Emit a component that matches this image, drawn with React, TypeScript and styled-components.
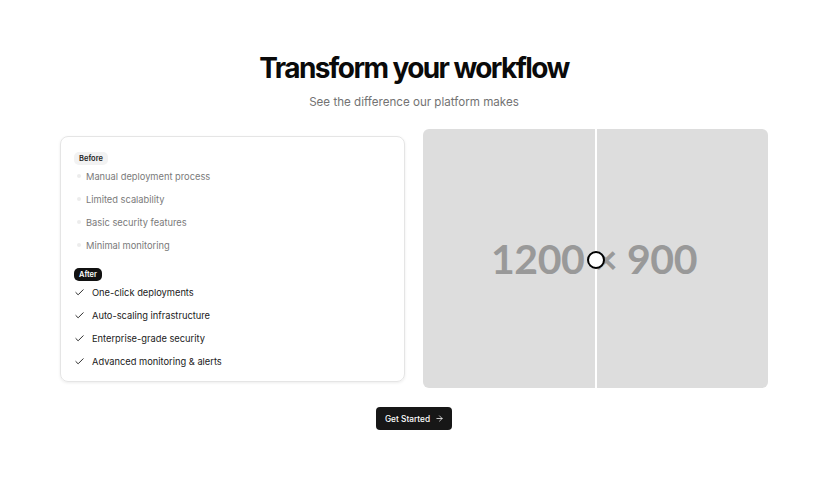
import React from 'react';
import styled, { createGlobalStyle } from 'styled-components';
import { Check, ArrowRight } from 'lucide-react';

const GlobalStyle = createGlobalStyle`
    body {
        margin: 0;
        background: #ffffff;
        font-family: Inter, "Noto Sans", sans-serif;
        color: #111111;
    }
`;

const Section = styled.section`
    display: flex;
    flex-direction: column;
    align-items: center;
    padding: 50px 60px 0;
`;

const Title = styled.h1`
    font-size: 28px;
    font-weight: 700;
    letter-spacing: -0.057em;
    line-height: 36px;
    margin: 0;
    color: #0a0a0a;
`;

const Subtitle = styled.p`
    font-size: 11.6px;
    color: #737373;
    margin: 7px 0 0;
    line-height: 18px;
`;

const Compare = styled.div`
    display: grid;
    grid-template-columns: 345px 345px;
    gap: 18px;
    align-items: center;
    margin-top: 18px;
`;

const Card = styled.div`
    border: 1px solid #e5e5e5;
    border-radius: 8px;
    box-shadow: 0 1px 3px rgba(0, 0, 0, 0.08);
    padding: 15px 13px 10px;
    height: 246px;
    box-sizing: border-box;
`;

const Badge = styled.span<{ $dark?: boolean }>`
    display: block;
    width: fit-content;
    font-size: 7.5px;
    font-weight: 600;
    line-height: 13px;
    padding: 0 5px;
    border-radius: 5px;
    background: ${(p) => (p.$dark ? '#111111' : '#f2f2f2')};
    color: ${(p) => (p.$dark ? '#ffffff' : '#222222')};
`;

const List = styled.ul`
    list-style: none;
    margin: 0;
    padding: 0;
`;

const Item = styled.li<{ $muted?: boolean }>`
    display: flex;
    align-items: center;
    gap: ${(p) => (p.$muted ? '5px' : '7px')};
    height: 23px;
    font-size: 9.3px;
    color: ${(p) => (p.$muted ? '#7a7a7a' : '#1a1a1a')};
`;

const Dot = styled.span`
    width: 4px;
    height: 4px;
    margin-left: 3px;
    border-radius: 50%;
    background: #ececec;
`;

const Group = styled.div`
    & + & {
        margin-top: 11px;
    }
`;

const Preview = styled.div`
    position: relative;
    height: 259px;
    border-radius: 6px;
    background: #dddddd;
    display: flex;
    align-items: center;
    justify-content: center;
    overflow: hidden;
`;

const PlaceholderText = styled.span`
    font-family: Lato, "Open Sans", sans-serif;
    font-weight: 700;
    font-size: 41px;
    color: #999999;
    letter-spacing: -0.01em;
    margin-left: -3px;
`;

const Divider = styled.div`
    position: absolute;
    top: 0;
    bottom: 0;
    left: 172px;
    width: 2px;
    background: #ffffff;
`;

const Handle = styled.div`
    position: absolute;
    top: 50%;
    left: 173px;
    width: 14px;
    height: 14px;
    margin: -8px 0 0 -9px;
    border-radius: 50%;
    background: #ffffff;
    border: 2px solid #000000;
`;

const Button = styled.button`
    display: flex;
    align-items: center;
    gap: 5px;
    margin-top: 19px;
    height: 23px;
    padding: 0 8px 0 9px;
    border: none;
    border-radius: 4px;
    background: #171717;
    color: #ffffff;
    font-family: inherit;
    font-size: 8.3px;
    font-weight: 500;
    cursor: pointer;
`;

const before = ['Manual deployment process', 'Limited scalability', 'Basic security features', 'Minimal monitoring'];
const after = ['One-click deployments', 'Auto-scaling infrastructure', 'Enterprise-grade security', 'Advanced monitoring & alerts'];

const App: React.FC = () => {
    return (
        <>
            <GlobalStyle />
            <Section>
                <Title>Transform your workflow</Title>
                <Subtitle>See the difference our platform makes</Subtitle>
                <Compare>
                    <Card>
                        <Group>
                            <Badge>Before</Badge>
                            <List>
                                {before.map((t) => (
                                    <Item key={t} $muted>
                                        <Dot />
                                        {t}
                                    </Item>
                                ))}
                            </List>
                        </Group>
                        <Group>
                            <Badge $dark>After</Badge>
                            <List>
                                {after.map((t) => (
                                    <Item key={t}>
                                        <Check size={11} strokeWidth={2} />
                                        {t}
                                    </Item>
                                ))}
                            </List>
                        </Group>
                    </Card>
                    <Preview>
                        <PlaceholderText>1200 × 900</PlaceholderText>
                        <Divider />
                        <Handle />
                    </Preview>
                </Compare>
                <Button>
                    Get Started
                    <ArrowRight size={9} strokeWidth={2} />
                </Button>
            </Section>
        </>
    );
};

export default App;
